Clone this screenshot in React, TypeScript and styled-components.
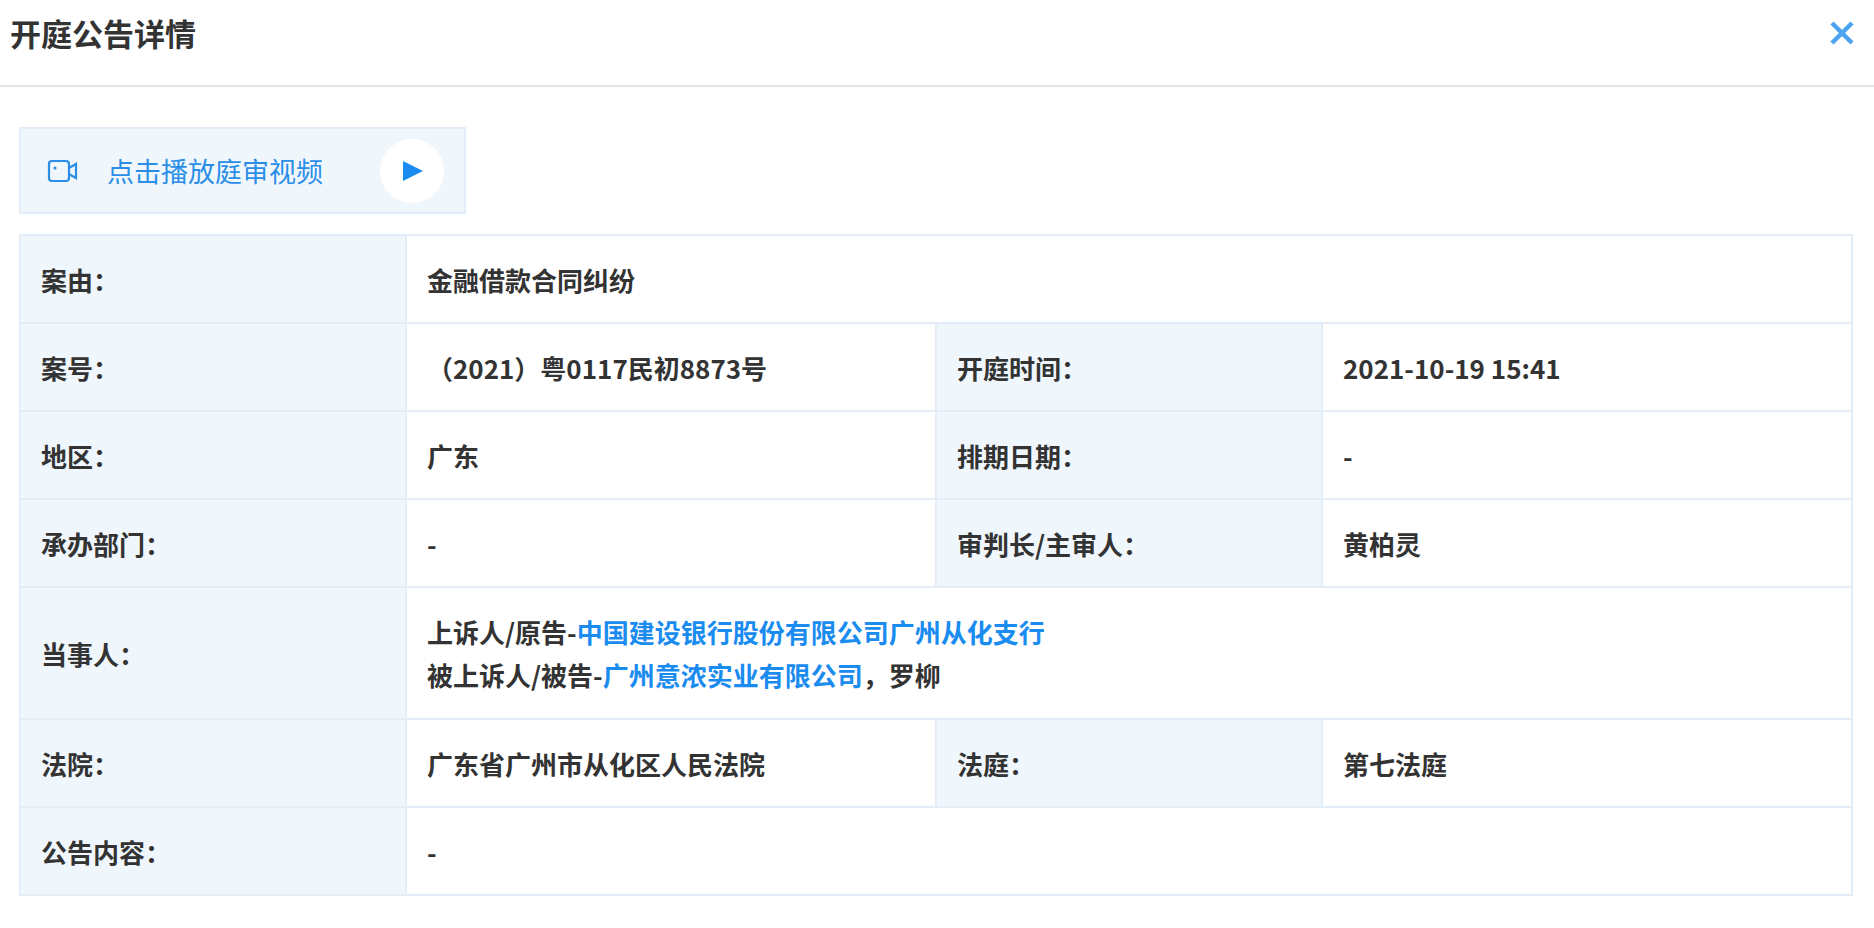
import React from "react";
import styled, { createGlobalStyle } from "styled-components";

const Global = createGlobalStyle`
  body { margin: 0; background: #fff; font-family: "Noto Sans CJK SC", "Noto Sans", sans-serif; color: #333; }
`;

const Header = styled.div`
  height: 87px; border-bottom: 2px solid #e4e4e4; display: flex; align-items: center;
  justify-content: space-between; padding: 0 18px 0 10px; box-sizing: border-box;
  padding-bottom: 20px;
`;
const Title = styled.h1`margin: 0; font-size: 31px; font-weight: 700; color: #333;`;
const Close = styled.button`
  border: 0; background: none; padding: 0; width: 28px; height: 28px; cursor: pointer; display: flex;
`;
const Body = styled.div`padding: 40px 21px 0 19px;`;
const VideoBtn = styled.div`
  width: 447px; height: 87px; box-sizing: border-box; background: #f0f7fc; border: 2px solid #e2edf7;
  display: flex; align-items: center; padding: 0 20px 0 26px; gap: 28px; color: #2a8ee8; font-size: 27px;
`;
const BtnText = styled.span`flex: 1;`;
const Play = styled.div`
  width: 64px; height: 64px; border-radius: 50%; background: #fff; display: flex; align-items: center; justify-content: center;
`;
const Table = styled.div`
  margin-top: 20px; display: grid; grid-template-columns: 386px 530px 386px 1fr;
  border-top: 2px solid #e2edf7; border-left: 2px solid #e2edf7;
`;
const Cell = styled.div<{ $label?: boolean; $span?: number; $h?: number }>`
  grid-column: span ${p => p.$span || 1};
  min-height: ${p => p.$h || 88}px; box-sizing: border-box;
  border-right: 2px solid #e2edf7; border-bottom: 2px solid #e2edf7;
  background: ${p => (p.$label ? "#f0f7fc" : "#fff")};
  padding: 0 20px; display: flex; flex-direction: column; justify-content: center;
  font-size: 26px; font-weight: 700; color: #333; line-height: 43px;
`;
const Link = styled.span`color: #1a8cf0;`;

const rows: [string, React.ReactNode, string?, React.ReactNode?][] = [];

export default function App() {
  return (
    <>
      <Global />
      <Header>
        <Title>开庭公告详情</Title>
        <Close aria-label="close">
          <svg width="28" height="28" viewBox="0 0 28 28"><path d="M4 4L24 24M24 4L4 24" stroke="#4ca3f0" strokeWidth="4.5" /></svg>
        </Close>
      </Header>
      <Body>
        <VideoBtn>
          <svg width="32" height="26" viewBox="0 0 32 26" fill="none" stroke="#2a8ee8" strokeWidth="2.2">
            <rect x="2" y="3" width="20" height="20" rx="3" />
            <path d="M22 10l7-4v14l-7-4" />
            <circle cx="8" cy="10" r="1.6" fill="#2a8ee8" stroke="none" />
          </svg>
          <BtnText>点击播放庭审视频</BtnText>
          <Play>
            <svg width="26" height="26" viewBox="0 0 26 26"><path d="M4 3L24 13L4 23Z" fill="#1a8cf0" /></svg>
          </Play>
        </VideoBtn>
        <Table>
          <Cell $label>案由：</Cell>
          <Cell $span={3}>金融借款合同纠纷</Cell>
          <Cell $label>案号：</Cell>
          <Cell>（2021）粤0117民初8873号</Cell>
          <Cell $label>开庭时间：</Cell>
          <Cell>2021-10-19 15:41</Cell>
          <Cell $label>地区：</Cell>
          <Cell>广东</Cell>
          <Cell $label>排期日期：</Cell>
          <Cell>-</Cell>
          <Cell $label>承办部门：</Cell>
          <Cell>-</Cell>
          <Cell $label>审判长/主审人：</Cell>
          <Cell>黄柏灵</Cell>
          <Cell $label $h={132}>当事人：</Cell>
          <Cell $span={3} $h={132}>
            <div>上诉人/原告-<Link>中国建设银行股份有限公司广州从化支行</Link></div>
            <div>被上诉人/被告-<Link>广州意浓实业有限公司</Link>，罗柳</div>
          </Cell>
          <Cell $label>法院：</Cell>
          <Cell>广东省广州市从化区人民法院</Cell>
          <Cell $label>法庭：</Cell>
          <Cell>第七法庭</Cell>
          <Cell $label>公告内容：</Cell>
          <Cell $span={3}>-</Cell>
        </Table>
      </Body>
    </>
  );
}
